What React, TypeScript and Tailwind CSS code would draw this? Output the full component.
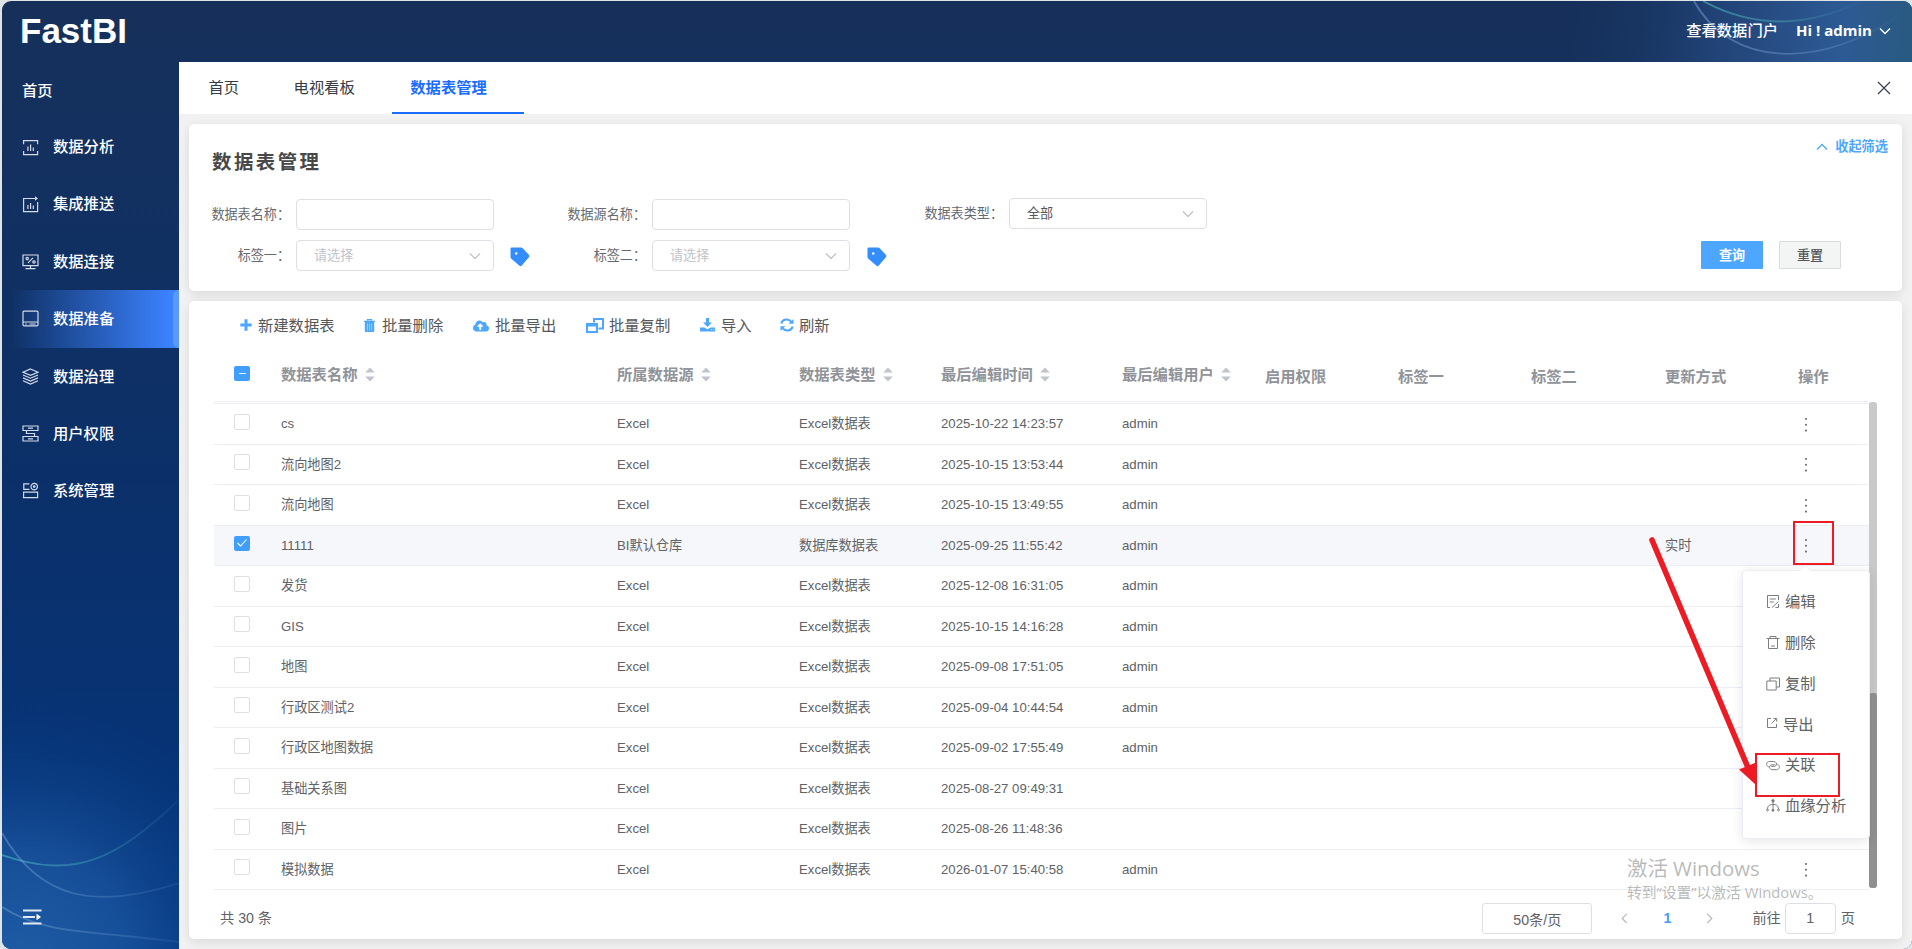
import React from "react";
import { FaCloudUploadAlt } from "react-icons/fa";

type IconProps = { children: React.ReactNode };

function NavIcon({ children }: IconProps) {
  return (
    <svg
      width="17"
      height="17"
      viewBox="0 0 17 17"
      fill="none"
      stroke="#d3dbe8"
      strokeWidth="1.2"
      className="block shrink-0"
    >
      {children}
    </svg>
  );
}

function MenuIcon({ children }: IconProps) {
  return (
    <svg
      width="14"
      height="15"
      viewBox="0 0 14 15"
      fill="none"
      stroke="#7b7d82"
      strokeWidth="1"
      className="block shrink-0"
    >
      {children}
    </svg>
  );
}

const NAV = [
  {
    label: "数据分析",
    icon: (
      <NavIcon>
        <path d="M1.6 5.2V1.6h14v3.6M1.6 12v3.6h14V12M5.9 7.5v4.5M8.6 5.5v6.5M11.3 8.5V12" />
      </NavIcon>
    ),
  },
  {
    label: "集成推送",
    icon: (
      <NavIcon>
        <path d="M14 2.5H1.6v13.1h14V6M5.9 9v4M8.6 7v6M11.3 9.5V13" />
        <path d="M13 .2l3 2.3-3 2.3z" fill="#d3dbe8" stroke="none" />
      </NavIcon>
    ),
  },
  {
    label: "数据连接",
    icon: (
      <NavIcon>
        <path d="M1 2h15v10.6H1zM8.5 12.6v2.8M3.5 15.6h10M6 9.8l5-5" />
        <circle cx="5.2" cy="5.6" r="1.2" />
        <circle cx="12" cy="9" r="1.2" />
      </NavIcon>
    ),
  },
  {
    label: "数据准备",
    active: true,
    icon: (
      <NavIcon>
        <rect x="1" y="1.2" width="15" height="14.6" rx="1" />
        <path d="M1 12h15M3.2 14h1.6M7.5 14h6" />
      </NavIcon>
    ),
  },
  {
    label: "数据治理",
    icon: (
      <NavIcon>
        <path d="M8.5 1L16 4.2 8.5 7.4 1 4.2zM1 7l7.5 3.2L16 7M1 9.9l7.5 3.2L16 9.9M1 12.8L8.5 16l7.5-3.2" />
      </NavIcon>
    ),
  },
  {
    label: "用户权限",
    icon: (
      <NavIcon>
        <path d="M1 1h15v4.5H1zM1 11.5h15V16H1zM6 3.2h5M6 13.8h5M4.5 5.5v3h8v3" />
      </NavIcon>
    ),
  },
  {
    label: "系统管理",
    icon: (
      <NavIcon>
        <path d="M7.4 1.8H1.8v5.6h5.6M1.6 10.2h14v5.4h-14z" />
        <circle cx="12.2" cy="4.6" r="3.2" />
        <circle cx="12.2" cy="4.6" r=".8" />
      </NavIcon>
    ),
  },
];

type Row = {
  name: string;
  source: string;
  kind: string;
  time: string;
  user?: string;
  mode?: string;
  checked?: boolean;
  dots?: boolean;
};

const ROWS: Row[] = [
  { name: "cs", source: "Excel", kind: "Excel数据表", time: "2025-10-22 14:23:57", user: "admin", dots: true },
  { name: "流向地图2", source: "Excel", kind: "Excel数据表", time: "2025-10-15 13:53:44", user: "admin", dots: true },
  { name: "流向地图", source: "Excel", kind: "Excel数据表", time: "2025-10-15 13:49:55", user: "admin", dots: true },
  { name: "11111", source: "BI默认仓库", kind: "数据库数据表", time: "2025-09-25 11:55:42", user: "admin", mode: "实时", checked: true, dots: true },
  { name: "发货", source: "Excel", kind: "Excel数据表", time: "2025-12-08 16:31:05", user: "admin" },
  { name: "GIS", source: "Excel", kind: "Excel数据表", time: "2025-10-15 14:16:28", user: "admin" },
  { name: "地图", source: "Excel", kind: "Excel数据表", time: "2025-09-08 17:51:05", user: "admin" },
  { name: "行政区测试2", source: "Excel", kind: "Excel数据表", time: "2025-09-04 10:44:54", user: "admin" },
  { name: "行政区地图数据", source: "Excel", kind: "Excel数据表", time: "2025-09-02 17:55:49", user: "admin" },
  { name: "基础关系图", source: "Excel", kind: "Excel数据表", time: "2025-08-27 09:49:31" },
  { name: "图片", source: "Excel", kind: "Excel数据表", time: "2025-08-26 11:48:36" },
  { name: "模拟数据", source: "Excel", kind: "Excel数据表", time: "2026-01-07 15:40:58", user: "admin", dots: true },
];

const COLS =
  "grid grid-cols-[67px_336px_182px_142px_181px_143px_133px_133px_134px_133px_1fr]";

function Chevron({ dir, color, size = 12 }: { dir: "down" | "up" | "left" | "right"; color: string; size?: number }) {
  const paths = {
    down: "M1 3.5l5 5 5-5",
    up: "M1 8.5l5-5 5 5",
    left: "M8.5 1l-5 5 5 5",
    right: "M3.5 1l5 5-5 5",
  };
  return (
    <svg width={size} height={size} viewBox="0 0 12 12" fill="none" stroke={color} strokeWidth="1.3" className="block shrink-0">
      <path d={paths[dir]} />
    </svg>
  );
}

function Header() {
  return (
    <header className="relative flex h-[61px] shrink-0 items-center justify-between pl-[18px] pr-[21px] text-white">
      <svg
        className="absolute right-0 top-0 h-[61px] w-[360px]"
        viewBox="1551 1 360 61"
        fill="none"
      >
        <defs>
          <linearGradient id="head" x1="1551" x2="1911" y1="20" y2="62" gradientUnits="userSpaceOnUse">
            <stop offset="0" stopColor="#15305a" stopOpacity="0" />
            <stop offset=".3" stopColor="#1a3866" />
            <stop offset=".55" stopColor="#25497f" />
            <stop offset=".8" stopColor="#2d5a94" />
            <stop offset="1" stopColor="#295a80" />
          </linearGradient>
          <linearGradient id="arc" x1="1690" x2="1900" y1="0" y2="0" gradientUnits="userSpaceOnUse">
            <stop offset="0" stopColor="#7ea6da" stopOpacity=".5" />
            <stop offset=".6" stopColor="#7ea6da" stopOpacity=".35" />
            <stop offset="1" stopColor="#7ea6da" stopOpacity="0" />
          </linearGradient>
          <linearGradient id="arcTeal" x1="1700" x2="1860" y1="0" y2="0" gradientUnits="userSpaceOnUse">
            <stop offset="0" stopColor="#4bb3bd" stopOpacity=".65" />
            <stop offset=".5" stopColor="#4bb3bd" stopOpacity=".45" />
            <stop offset="1" stopColor="#4bb3bd" stopOpacity="0" />
          </linearGradient>
        </defs>
        <path d="M1551 1h360v61h-360z" fill="url(#head)" />
        <path d="M1693 1C1730 68 1820 70 1900 14" stroke="url(#arc)" strokeWidth="1.8" />
        <path d="M1702 1Q1778 42 1860 1" stroke="url(#arcTeal)" strokeWidth="1.8" />
      </svg>
      <div className="relative -mt-[2px] text-[35px] font-bold leading-none">FastBI</div>
      <div className="relative -mt-px flex items-center text-[15.3px] font-medium leading-none">
        <span>查看数据门户</span>
        <span className="ml-[18px] mr-[8px] w-[75px] whitespace-nowrap text-[15px] font-bold [font-family:'Open_Sans','Noto_Sans',sans-serif]">
          Hi ! admin
        </span>
        <Chevron dir="down" color="#fff" />
      </div>
    </header>
  );
}

function Sidebar() {
  return (
    <aside className="flex w-[177px] shrink-0 flex-col text-[15.3px] font-medium leading-none text-white">
      <div className="flex h-[56.5px] items-center pl-[20px]">首页</div>
      {NAV.map((item) => (
        <div
          key={item.label}
          className={
            item.active
              ? "flex h-[58px] items-center justify-between bg-linear-to-r from-[#3b82ff]/0 from-5% to-[#3b82ff] to-95%"
              : "flex h-[57.1px] items-center justify-between"
          }
        >
          <div className="flex items-center gap-[14px] pl-[20px]">
            {item.icon}
            <span>{item.label}</span>
          </div>
          {item.active && <div className="h-full w-[6px] rounded-l-[6px] bg-[#65a2ff]/70" />}
        </div>
      ))}
      <div className="mt-auto pb-[24px] pl-[21px]">
        <svg width="19" height="16" viewBox="0 0 19 16" className="block">
          <path d="M0 1.5h18.5M0 8h12M0 14.5h18.5" stroke="#e2e9f3" strokeWidth="1.8" />
          <path d="M13.5 4.8L18 8l-4.5 3.2z" fill="#fff" />
        </svg>
      </div>
    </aside>
  );
}

function Tabs() {
  return (
    <div className="flex h-[52px] shrink-0 bg-white text-[15.3px] leading-none text-[#333b46]">
      <div className="flex items-center pl-[29.5px]">首页</div>
      <div className="flex items-center pl-[54.5px]">电视看板</div>
      <div className="ml-[37px] flex w-[132px] items-center border-b-2 border-[#1a6dff] pl-[18.5px] pt-[2px] font-bold text-[#1a6dff]">
        数据表管理
      </div>
      <div className="ml-auto flex items-center pr-[21px]">
        <svg width="14" height="14" viewBox="0 0 14 14" stroke="#343d55" strokeWidth="1.2" className="block">
          <path d="M1 1l12 12M13 1L1 13" />
        </svg>
      </div>
    </div>
  );
}

function Tag() {
  return (
    <svg width="20" height="20" viewBox="0 0 20 20" className="ml-[16px] mt-[2px] block">
      <path d="M.5 1.8Q.5.5 1.8.5H11Q12 .5 12.7 1.2L18.8 7.8Q19.8 9.2 18.9 10.3L11.8 18.6Q10.5 20 9.2 18.6L1.1 11.5Q.5 10.9.5 10z" fill="#348dff" />
      <circle cx="6.2" cy="6.5" r="1.2" fill="#fff" />
    </svg>
  );
}

function Label({ children }: IconProps) {
  return <span className="mr-[6px] -ml-px w-[79px] shrink-0 whitespace-nowrap text-right">{children}</span>;
}

function Select({ text, filled }: { text: string; filled?: boolean }) {
  return (
    <div
      className={
        filled
          ? "flex h-[31px] w-[198px] items-center justify-between rounded-[4px] border border-[#dcdfe6] bg-white pl-[17px] pr-[12px] text-[#55575b]"
          : "flex h-[31px] w-[198px] items-center justify-between rounded-[4px] border border-[#dcdfe6] bg-white pl-[17px] pr-[12px] text-[#bfc3cb]"
      }
    >
      <span>{text}</span>
      <Chevron dir="down" color="#c0c4cc" />
    </div>
  );
}

function Filters() {
  return (
    <section className="flex h-[167px] shrink-0 flex-col rounded-[5px] bg-white pl-[23px] shadow-[0_3px_12px_rgba(0,0,0,0.1)]">
      <div className="flex h-[74px] justify-between">
        <h1 className="pt-[29px] text-[19.4px] font-bold leading-none tracking-[2.5px] text-[#484848]">数据表管理</h1>
        <div className="flex h-[46px] items-center gap-[7px] pr-[14px] text-[13.2px] font-bold leading-none text-[#4da6ff]">
          <Chevron dir="up" color="#4da6ff" />
          <span>收起筛选</span>
        </div>
      </div>
      <div className="flex h-[42px] items-start text-[13.1px] leading-[31px] text-[#666a70]">
        <div className="flex w-[356px] pt-px">
          <Label>数据表名称：</Label>
          <div className="h-[31px] w-[198px] rounded-[4px] border border-[#dcdfe6]" />
        </div>
        <div className="flex w-[357px] pt-px">
          <Label>数据源名称：</Label>
          <div className="h-[31px] w-[198px] rounded-[4px] border border-[#dcdfe6]" />
        </div>
        <div className="flex">
          <Label>数据表类型：</Label>
          <Select text="全部" filled />
        </div>
      </div>
      <div className="flex items-start text-[13.1px] leading-[31px] text-[#666a70]">
        <div className="flex w-[356px] items-center">
          <Label>标签一：</Label>
          <Select text="请选择" />
          <Tag />
        </div>
        <div className="flex w-[357px] items-center">
          <Label>标签二：</Label>
          <Select text="请选择" />
          <div className="pl-px">
            <Tag />
          </div>
        </div>
        <div className="ml-auto mr-[61px] mt-px flex gap-[16px] leading-none">
          <button className="h-[28px] w-[62px] rounded-[1px] bg-[#4da6ff] pt-px font-bold text-white">查询</button>
          <button className="h-[28px] w-[62px] rounded-[1px] border border-[#d9dcdc] bg-[#f3f5f4] pt-px font-medium text-[#55575b]">重置</button>
        </div>
      </div>
    </section>
  );
}

function Toolbar() {
  return (
    <div className="flex h-[49px] items-center pl-[51px] text-[15.3px] leading-none text-[#55575b]">
      <div className="flex w-[124px] items-center gap-[6px]">
        <svg width="12" height="12" viewBox="0 0 12 12" className="block">
          <path d="M6 .3v11.4M.3 6h11.4" stroke="#4da6ff" strokeWidth="3" />
        </svg>
        <span>新建数据表</span>
      </div>
      <div className="flex w-[109px] items-center gap-[7px]">
        <svg width="11" height="13" viewBox="0 0 11 13" className="block">
          <path d="M3.5 1.5V.6h4v.9M0 2.3h11" stroke="#4da6ff" strokeWidth="1.3" fill="none" />
          <path d="M.8 3h9.4v9q0 1-1 1H1.8q-1 0-1-1z" fill="#4da6ff" />
          <path d="M3.5 4.5v7M5.5 4.5v7M7.5 4.5v7" stroke="#b3d5ff" strokeWidth=".8" />
        </svg>
        <span>批量删除</span>
      </div>
      <div className="flex w-[113px] items-center gap-[6px]">
        <FaCloudUploadAlt className="text-[16px] text-[#4da6ff]" />
        <span>批量导出</span>
      </div>
      <div className="flex w-[114px] items-center gap-[5px]">
        <svg width="18" height="15" viewBox="0 0 18 15" fill="none" stroke="#4da6ff" className="block">
          <path d="M8 4.5V1h9v9.500h-4.500" strokeWidth="2" />
          <path d="M1 6h10v8H1z" strokeWidth="2" />
          <path d="M1 7h10" strokeWidth="3" />
        </svg>
        <span>批量复制</span>
      </div>
      <div className="flex w-[80px] items-center gap-[6px]">
        <svg width="15" height="14" viewBox="0 0 15 14" fill="#4da6ff" className="block">
          <path d="M6 0h3v4.5h3L7.5 9 3 4.5h3z" />
          <path d="M0 9.5h4.500l3 2 3-2H15V13.5H0z" />
          <path d="M11 11.5h1M13 11.5h1" stroke="#fff" strokeWidth=".8" />
        </svg>
        <span>导入</span>
      </div>
      <div className="flex items-center gap-[5px]">
        <svg width="14" height="14" viewBox="0 0 14 14" fill="none" stroke="#4da6ff" strokeWidth="2.1" className="block">
          <path d="M1.3 5.500C2.500 1 8.500 0 11.300 3.800M12.700 8.500C11.500 13 5.500 14 2.700 10.200" />
          <path d="M13.500 1v4.800H8.700zM.5 13V8.200h4.800z" fill="#4da6ff" stroke="none" />
        </svg>
        <span>刷新</span>
      </div>
    </div>
  );
}

function Sorted({ children }: IconProps) {
  return (
    <div className="flex items-center gap-[7.5px] whitespace-nowrap">
      <span>{children}</span>
      <svg width="10" height="15" viewBox="0 0 10 15" fill="#c0c4cc" className="block">
        <path d="M5 .5L9.8 5.500H.2zM5 14.500L.2 9.500h9.600z" />
      </svg>
    </div>
  );
}

function Dots() {
  return (
    <svg width="4" height="16" viewBox="0 0 4 16" fill="#6c6e72" className="ml-[6px] mt-px block">
      <circle cx="2" cy="2" r="1.050" />
      <circle cx="2" cy="7.800" r="1.050" />
      <circle cx="2" cy="13.600" r="1.050" />
    </svg>
  );
}

function Table() {
  return (
    <div className="ml-[25px] flex h-[540px] w-[1663px]">
      <div className="w-[1655px] border-b border-[#ebeef5]">
        <div className={COLS + " h-[52px] items-center border-b border-[#ebeef5] pb-px text-[15.3px] font-bold leading-none text-[#909399]"}>
          <div className="-mt-[3px] ml-[20px] flex h-[15px] w-[16px] items-center justify-center rounded-[2px] bg-[#409eff]">
            <div className="h-px w-[7px] bg-white/90" />
          </div>
          <Sorted>数据表名称</Sorted>
          <Sorted>所属数据源</Sorted>
          <Sorted>数据表类型</Sorted>
          <Sorted>最后编辑时间</Sorted>
          <Sorted>最后编辑用户</Sorted>
          <div className="pt-[3px]">启用权限</div>
          <div className="pt-[3px]">标签一</div>
          <div className="pt-[3px]">标签二</div>
          <div className="pt-[3px]">更新方式</div>
          <div className="pt-[3px]">操作</div>
        </div>
        <div className="mt-px h-px bg-[#ebeef5]" />
        {ROWS.map((row, i) => (
          <div
            key={row.name}
            className={
              COLS +
              " items-center border-b border-[#ebeef5] text-[13.2px] leading-none text-[#606266] " +
              (i % 2 === 0 ? "h-[41px] " : "h-[40px] ") +
              (row.checked ? "bg-[#f5f7fa]" : "")
            }
          >
            {row.checked ? (
              <div className="-mt-[5px] ml-[20px] flex h-[15px] w-[16px] items-center justify-center rounded-[2px] bg-[#409eff]">
                <svg width="12" height="10" viewBox="0 0 12 10" fill="none" stroke="#fff" strokeWidth="1.1">
                  <path d="M1.500 5l3 3L10.500 1.500" />
                </svg>
              </div>
            ) : (
              <div className="-mt-[5px] ml-[20px] size-[16px] rounded-[2px] border border-[#dcdfe6]" />
            )}
            <div>{row.name}</div>
            <div>{row.source}</div>
            <div>{row.kind}</div>
            <div>{row.time}</div>
            <div>{row.user}</div>
            <div />
            <div />
            <div />
            <div>{row.mode}</div>
            <div>{row.dots && <Dots />}</div>
          </div>
        ))}
      </div>
      <div className="mt-[52px] h-[486px] w-[8px] rounded-[3px] bg-[#c9c9c9] pt-[291px]">
        <div className="h-[195px] rounded-[3px] bg-[#909090]" />
      </div>
    </div>
  );
}

function Pagination() {
  return (
    <div className="flex h-[48px] items-center pl-[31px] pr-[47px] pt-[9px] text-[14.2px] leading-none text-[#606266]">
      <span>共 30 条</span>
      <div className="ml-auto flex h-[31px] w-[110px] items-center justify-center rounded-[3px] border border-[#dcdfe6] pt-[3px]">50条/页</div>
      <div className="ml-[27px]"><Chevron dir="left" color="#b4b8bf" size={11} /></div>
      <span className="w-[74px] text-center font-bold text-[#409eff]">1</span>
      <Chevron dir="right" color="#b4b8bf" size={11} />
      <span className="ml-[37px] whitespace-nowrap">前往</span>
      <div className="ml-[4px] mr-[5px] flex h-[31px] w-[51px] items-center justify-center rounded-[4px] border border-[#dcdfe6]">1</div>
      <span>页</span>
    </div>
  );
}

const MENU = [
  {
    label: "编辑",
    icon: (
      <MenuIcon>
        <path d="M4 13.5H1.5V1.5h11v4.5M3.8 5h6M3.8 8h4M6 13.5l6.500-6M9.500 13.500h3V10" />
      </MenuIcon>
    ),
  },
  {
    label: "删除",
    icon: (
      <MenuIcon>
        <path d="M.5 3.5h13M4 3.500V1.500h6v2M2.500 3.500v10h9v-10M5 11h4" />
      </MenuIcon>
    ),
  },
  {
    label: "复制",
    icon: (
      <MenuIcon>
        <path d="M.8 5h9.400v9H.8zM4 5V2h9.500v9h-3.300" />
      </MenuIcon>
    ),
  },
  {
    label: "导出",
    icon: (
      <MenuIcon>
        <path d="M5 1.500H1.500v9h9V7M5.500 6.500l5-5M7.500 1.500h3.200v3.200" />
      </MenuIcon>
    ),
  },
  {
    label: "关联",
    icon: (
      <MenuIcon>
        <path d="M2.800 9C-.6 7.800.2 3.500 3.500 3.500h4.300c3.400 0 3.600 4.900.2 4.900H5.200" />
        <path d="M11.200 6.200c3.400 1.200 2.600 5.500-.7 5.500H6.200c-3.400 0-3.600-4.900-.2-4.900h2.800" />
      </MenuIcon>
    ),
  },
  {
    label: "血缘分析",
    icon: (
      <MenuIcon>
        <path d="M7 3v10M1.500 11C1.500 7.500 4 6.500 7 6.500s5.500 1 5.500 4.500" />
        <circle cx="7" cy="2.800" r="1.200" fill="#7b7d82" />
        <circle cx="7" cy="12.300" r="1" fill="#7b7d82" />
        <circle cx="1.500" cy="12" r=".9" />
        <circle cx="12.500" cy="12" r=".9" />
      </MenuIcon>
    ),
  },
];

function RowMenu() {
  return (
    <div className="absolute left-[1742px] top-[570px] flex h-[269px] w-[128px] flex-col rounded-[4px] border border-[#ebeef5] bg-white pl-[23px] pt-[10.5px] text-[15.3px] leading-none text-[#606266] shadow-[0_2px_12px_rgba(0,0,0,0.1)]">
      <svg className="absolute left-[56px] top-[-6px]" width="12" height="7" viewBox="0 0 12 7">
        <path d="M0 6.500L6 .500l6 6" fill="#fff" stroke="#ebeef5" />
      </svg>
      {MENU.map((item) => (
        <div
          key={item.label}
          className={item.label === "导出" ? "flex h-[40.8px] items-center gap-[3px]" : "flex h-[40.8px] items-center gap-[5px]"}
        >
          {item.icon}
          <span>{item.label}</span>
        </div>
      ))}
    </div>
  );
}

function Annotations() {
  return (
    <svg className="pointer-events-none absolute left-0 top-0" width="1912" height="949" viewBox="0 0 1912 949" fill="none">
      <path d="M1652 540L1749 770" stroke="#ed1c24" strokeWidth="5.6" strokeLinecap="round" />
      <path d="M1739 769.500l17-7V785z" fill="#ed1c24" />
      <path d="M1794 522h39v42h-39zM1756 754h83v42h-83z" stroke="#ed1c24" strokeWidth="2" />
    </svg>
  );
}

function Watermark() {
  return (
    <div className="pointer-events-none absolute left-[1627px] top-[856px] whitespace-nowrap leading-none text-[#8a8a8a]/60 [font-family:'Open_Sans','Noto_Sans_CJK_SC',sans-serif]">
      <div className="text-[20.4px] leading-[24px]">激活 Windows</div>
      <div className="text-[14.8px] leading-[24px]">转到“设置”以激活 Windows。</div>
    </div>
  );
}

export default function App() {
  return (
    <div className="relative h-[949px] w-[1912px] overflow-hidden bg-[#dfe5e6] pl-[2px] pt-px [font-family:'Liberation_Sans','Noto_Sans_CJK_SC',sans-serif]">
      <div className="relative flex h-[948px] w-[1910px] flex-col overflow-hidden rounded-[9px] bg-linear-to-b from-[#16305a] via-[#0b3069] to-[#03357e]">
        <svg className="absolute bottom-0 left-0" width="177" height="360" viewBox="2 589 177 360" fill="none">
          <defs>
            <radialGradient id="glow" cx="20" cy="960" r="270" gradientUnits="userSpaceOnUse">
              <stop offset="0" stopColor="#1e5ca4" />
              <stop offset=".4" stopColor="#1c58a2" stopOpacity=".75" />
              <stop offset="1" stopColor="#03357e" stopOpacity="0" />
            </radialGradient>
            <linearGradient id="waveTeal" x1="2" x2="179" y1="0" y2="0" gradientUnits="userSpaceOnUse">
              <stop offset="0" stopColor="#45a5bd" stopOpacity=".75" />
              <stop offset=".6" stopColor="#45a5bd" stopOpacity=".35" />
              <stop offset="1" stopColor="#45a5bd" stopOpacity=".08" />
            </linearGradient>
            <linearGradient id="wave" x1="2" x2="179" y1="0" y2="0" gradientUnits="userSpaceOnUse">
              <stop offset="0" stopColor="#8db4e2" stopOpacity=".4" />
              <stop offset=".6" stopColor="#8db4e2" stopOpacity=".22" />
              <stop offset="1" stopColor="#8db4e2" stopOpacity=".1" />
            </linearGradient>
          </defs>
          <path d="M2 589h177v360H2z" fill="url(#glow)" />
          <path d="M2 855C75 880 115 860 179 800" stroke="url(#waveTeal)" strokeWidth="1.8" />
          <path d="M2 833C40 900 95 910 179 883" stroke="url(#wave)" strokeWidth="1.8" />
          <path d="M2 907C45 935 90 930 179 942" stroke="url(#wave)" strokeWidth="1.8" />
        </svg>
        <Header />
        <div className="relative flex min-h-0 flex-1">
          <Sidebar />
          <main className="flex min-w-0 flex-1 flex-col bg-[#f2f2f2]">
            <Tabs />
            <div className="flex flex-col gap-[10px] pl-[10px] pr-[10px] pt-[10px]">
              <Filters />
              <section className="h-[638px] rounded-[5px] bg-white shadow-[0_3px_12px_rgba(0,0,0,0.1)]">
                <Toolbar />
                <Table />
                <Pagination />
              </section>
            </div>
          </main>
        </div>
      </div>
      <RowMenu />
      <Watermark />
      <Annotations />
    </div>
  );
}
